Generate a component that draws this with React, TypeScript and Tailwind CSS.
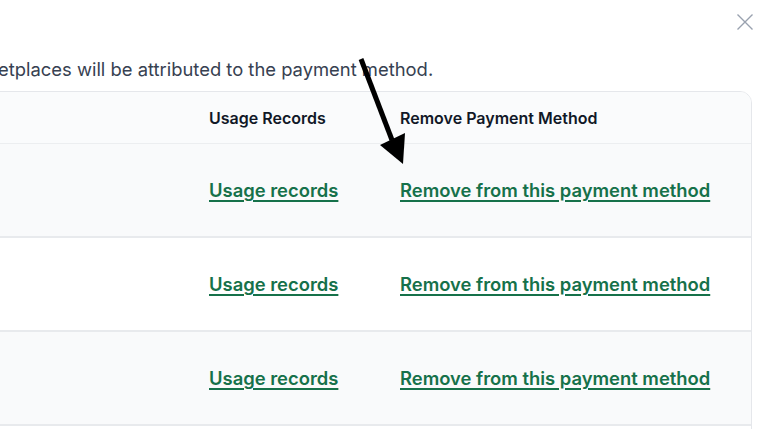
import React from "react";

const rows = [0, 1, 2];

export default function App() {
  return (
    <div
      className="relative w-[768px] h-[429px] overflow-hidden bg-white"
      style={{ fontFamily: "Inter, 'Noto Sans', sans-serif" }}
    >
      <button className="absolute right-[14px] top-[13px] w-[18px] h-[18px] text-gray-400">
        <svg viewBox="0 0 18 18" width="18" height="18" fill="none" stroke="currentColor" strokeWidth="1.4">
          <path d="M1.5 1.5 L16.5 16.5 M16.5 1.5 L1.5 16.5" />
        </svg>
      </button>

      <div className="pt-[57px]">
        <p className="-ml-[2px] text-[18.4px] leading-[24px] text-[#374151] whitespace-nowrap">
          etplaces will be attributed to the payment method.
        </p>

        <div className="mt-[10px] -ml-[20px] w-[772px] border border-[#e5e7eb] rounded-t-xl overflow-hidden">
          <div className="grid grid-cols-[228px_191px_1fr] h-[52px] items-center bg-[#fafbfc] border-b border-[#eceef0]">
            <div />
            <div className="text-[16px] font-semibold text-[#111827]">Usage Records</div>
            <div className="text-[16px] font-semibold text-[#111827]">Remove Payment Method</div>
          </div>
          {rows.map((i) => (
            <div
              key={i}
              className={`grid grid-cols-[228px_191px_1fr] h-[94px] pt-[2px] items-center border-b-2 border-[#e8eaed] ${
                i % 2 === 0 ? "bg-[#f9fafb]" : "bg-white"
              }`}
            >
              <div />
              <a className="text-[18.4px] font-semibold text-[#16714a] underline underline-offset-[3px] decoration-[1.5px] cursor-pointer">
                Usage records
              </a>
              <a className="text-[18.4px] font-semibold text-[#16714a] underline underline-offset-[3px] decoration-[1.5px] cursor-pointer">
                Remove from this payment method
              </a>
            </div>
          ))}
          <div className="h-[40px] bg-white" />
        </div>
      </div>

      <svg className="absolute left-0 top-0 pointer-events-none" width="768" height="429">
        <line x1="361" y1="59" x2="392" y2="140" stroke="#000" strokeWidth="5" />
        <polygon points="380,145 405,133 403,164" fill="#000" />
      </svg>
    </div>
  );
}
